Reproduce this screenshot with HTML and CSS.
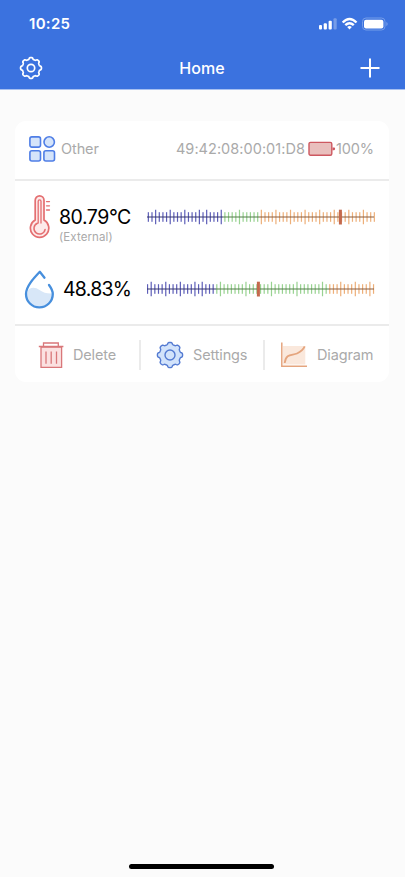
FILE: index.html
```
<!DOCTYPE html>
<html lang="en">
<head>
<meta charset="utf-8">
<title>Home</title>
<link rel="stylesheet" href="styles.css">
</head>
<body>
<header class="top">
  <div class="status">
    <span class="time">10:25</span>
    <svg class="indicators" width="70" height="16" viewBox="0 0 70 16">
      <g fill="#fff"><rect x="1" y="9" width="3" height="4.5" rx="1"/><rect x="5.7" y="7.2" width="3.2" height="6.3" rx="1"/><rect x="10.6" y="4.7" width="3.2" height="8.8" rx="1"/><rect x="15.5" y="2.2" width="3.2" height="11.3" rx="1" opacity=".3"/></g>
      <g fill="none" stroke="#fff" stroke-width="2.4"><path d="M24.7 6.5Q31.5-.3 38.5 6.5M27.3 9.2Q31.5 5.2 35.8 9.2"/></g>
      <path d="M29.2 11Q31.5 9 33.8 11L31.5 13.5Z" fill="#fff"/>
      <rect x="44.5" y="2" width="22.5" height="12" rx="3.5" fill="none" stroke="#759de9"/>
      <rect x="46" y="3.7" width="19.4" height="8.8" rx="2" fill="#fff"/>
      <path d="M68.3 6v4q1.4-.5 1.4-2t-1.4-2z" fill="#759de9"/>
    </svg>
  </div>
  <nav class="nav">
    <svg class="gear" width="24" height="24" viewBox="-12 -12 24 24" fill="none" stroke="#fff" stroke-width="1.7"><path data-gear="10.2"/><circle r="3.7"/></svg>
    <h1>Home</h1>
    <svg width="20" height="20" viewBox="0 0 20 20" stroke="#fff" stroke-width="2"><path d="M10 .5v19M.5 10h19"/></svg>
  </nav>
</header>
<main class="card">
  <section class="device">
    <svg width="28" height="28" viewBox="0 0 28 28" fill="#d5e4fa" stroke="#4f7ee6" stroke-width="1.6"><rect x="1.9" y="1.9" width="10.6" height="10.2" rx="2"/><circle cx="21.2" cy="7" r="5.2"/><rect x="1.9" y="15.8" width="10.6" height="10.2" rx="2"/><rect x="15.9" y="15.8" width="10.6" height="10.2" rx="2"/></svg>
    <span class="kind">Other</span>
    <span class="mac">49:42:08:00:01:D8</span>
    <svg class="cell" width="28" height="16" viewBox="0 0 28 16"><rect x="1" y="1.4" width="22.8" height="12.8" rx="1.5" fill="#e9bfbd" stroke="#cd5860" stroke-width="1.4"/><path d="M24.5 6.4h1.6q1 0 1 1.4t-1 1.4h-1.6z" fill="#cd5860"/></svg>
    <span class="level">100%</span>
  </section>
  <section class="readings">
    <div class="reading temp">
      <svg width="24" height="46" viewBox="0 0 24 46" fill="none" stroke="#e46f71" stroke-width="1.7" stroke-linecap="round"><path d="M6.2 26V6.2a4.4 4.4 0 0 1 8.8 0V26a9.2 9.2 0 1 1-8.8 0Z" fill="#fdeaea"/><path d="M9.2 29V7.2a1.4 1.4 0 0 1 2.8 0V29" stroke-width="1.3"/><path d="M8.4 29.3a5.6 5.6 0 1 0 7.7 6.1" stroke-width="1.5"/><path d="M17.5 7.6h3M17.5 11.8h3M17.5 16h3" stroke-width="1.3"/></svg>
      <div class="figure"><span class="value">80.79°C</span><small>(External)</small></div>
      <svg class="scale" data-start="1.3" data-majors="2,6,10,14,16,20,25,31,35,39,43,47,51,55,59" data-green="76" data-orange="112" data-mark="193.4" width="228" height="18" viewBox="0 0 228 18"></svg>
    </div>
    <div class="reading humid">
      <svg width="32" height="40" viewBox="0 0 32 40"><path d="M5.2 20Q10 17 15.5 21T28.2 24.5Q28 37.5 16 37.5 3.5 36.5 3 25 3 22 5.2 20Z" fill="#d8e7f8"/><path d="M20.5 8.7L15.8 2.8C9 10 2 17.5 2 25a13.3 13.3 0 0 0 26.8 0C28.8 21.5 27 18.7 25 16" fill="none" stroke="#478fdd" stroke-width="2.3" stroke-linecap="round" stroke-linejoin="round"/></svg>
      <div class="figure"><span class="value">48.83%</span></div>
      <svg class="scale" data-start=".5" data-majors="1,5,9,13,15,20,27,34,41,48,53,57,61" data-green="69" data-orange="182" data-mark="111.4" width="228" height="18" viewBox="0 0 228 18"></svg>
    </div>
  </section>
  <footer class="actions">
    <div class="action delete"><svg width="26" height="28" viewBox="0 0 26 28" fill="none" stroke="#d9777a" stroke-width="1.3"><path d="M3 6h20.6v20.3H3z" fill="#fbe1e1"/><path d="M.8 5.5h24.6M5.5 5V2h14.8v3M8 10.5v12.3M13.2 10.5v12.3M18.5 10.5v12.3"/></svg><span>Delete</span></div>
    <div class="action settings"><svg width="28" height="28" viewBox="-14 -14 28 28" fill="#d2e3fb" stroke="#547bd2" stroke-width="1.4"><path data-gear="12.3"/><circle r="5"/></svg><span>Settings</span></div>
    <div class="action diagram"><svg width="28" height="28" viewBox="0 0 28 28" fill="none" stroke="#e5a57e" stroke-width="1.5"><path d="M3 5h22.3v18.5H3z" fill="#fae8dc" stroke="none"/><path d="M1.8 1.5V25.3H27"/><path d="M4.7 22C6 12 12 14.7 17 12.5S23.3 8.5 24.7 5.4" stroke-width="1.8"/></svg><span>Diagram</span></div>
  </footer>
</main>
<div class="home-bar"></div>
<script src="ui.js"></script>
</body>
</html>
```
FILE: styles.css
```
* { box-sizing: border-box; }
body {
  margin: 0;
  height: 877px;
  display: flex;
  flex-direction: column;
  background: #fbfbfb;
  color: #000;
  font-family: Inter, "Liberation Sans", sans-serif;
}
svg { display: block; flex: none; }
.top { height: 90px; background: #3b72df; color: #fff; border-bottom: 1px solid #a7c0f1; }
.status { height: 47px; display: flex; justify-content: space-between; align-items: center; padding: 0 17px 0 29px; }
.time { font-size: 15px; font-weight: 600; letter-spacing: .3px; }
.nav { height: 42px; display: flex; justify-content: space-between; align-items: center; padding: 0 25px 0 19px; }
.nav h1 { margin: 0 0 0 1px; font-size: 16px; font-weight: 500; letter-spacing: .1px; }
.card { width: 374px; height: 261px; margin: 31px 0 0 15px; border-radius: 11px; background: #fff; }
.device { height: 60px; padding: 0 15px 3px 13px; display: flex; align-items: center; border-bottom: 2px solid #ebebeb; color: #aaa; font-size: 14.5px; white-space: nowrap; }
.kind { margin-left: 5px; letter-spacing: -.1px; }
.mac { margin-left: auto; letter-spacing: .04px; }
.cell { margin-left: 3px; }
.level { margin-left: 0; letter-spacing: -.1px; }
.readings { height: 145px; border-bottom: 2px solid #ebebeb; padding-top: 13px; }
.reading { display: flex; }
.temp { height: 72px; padding-left: 14px; }
.humid { padding-left: 9px; padding-top: 3px; }
.figure { display: flex; flex-direction: column; align-items: flex-start; white-space: nowrap; }
.temp .figure { width: 72px; margin: 11px 16px 0 6px; }
.humid .figure { width: 68px; margin: 8px 16px 0 7px; }
.value { font-size: 19.5px; line-height: 24px; letter-spacing: -.45px; }
.humid .value { letter-spacing: -.75px; }
.figure small { font-size: 11.5px; line-height: 16px; color: #aaa; letter-spacing: .1px; }
.scale { margin-top: 14px; }
.humid .scale { margin-top: 10.5px; }
.actions { height: 56px; display: grid; grid-template-columns: 126px 124px 124px; align-items: center; color: #aaa; font-size: 14.5px; padding-top: 1px; }
.action { height: 30px; display: flex; align-items: center; border-right: 2px solid #ebebeb; letter-spacing: -.15px; }
.action:last-child { border: 0; }
.delete { padding-left: 23px; gap: 9px; }
.settings { padding-left: 15px; gap: 9px; }
.diagram { padding-left: 15px; gap: 9px; }
.home-bar { width: 145px; height: 5px; margin: auto 0 8px 129px; border-radius: 3px; background: #000; }
```
FILE: ui.js
```
// Eight-lobed gear outline, radius taken from data-gear.
document.querySelectorAll('[data-gear]').forEach(p => {
  const r = +p.dataset.gear, pts = [];
  for (let i = 0; i < 160; i++) {
    const a = i * Math.PI / 80;
    const k = r * (0.94 + 0.085 * Math.tanh(2.2 * Math.cos(8 * a)));
    pts.push((k * Math.cos(a)).toFixed(2) + ' ' + (k * Math.sin(a)).toFixed(2));
  }
  p.setAttribute('d', 'M' + pts.join('L') + 'Z');
});

// Range scales: ticks, centre line and current-value mark.
document.querySelectorAll('.scale').forEach(s => {
  const d = s.dataset, majors = d.majors.split(',').map(Number);
  const green = +d.green, orange = +d.orange, mark = +d.mark;
  let out = '';
  for (let i = 0; i < 63; i++) {
    const x = +d.start + i * 3.645;
    if (x > 227.5) break;
    const major = majors.includes(i);
    const c = x < green ? '#5e5fb8' : x < orange ? '#98d291' : '#edaf79';
    const h = major ? 14.5 : 9.6;
    out += `<rect x="${x - .55}" y="${9 - h / 2}" width="1.2" height="${h}" fill="${c}"/>`;
  }
  [[0, green, '#35356f'], [green, orange, '#527c49'], [orange, 227, '#8a5c3c']].forEach(([a, b, c]) => {
    out += `<rect x="${a}" y="8.5" width="${b - a}" height="1" fill="${c}"/>`;
  });
  out += `<rect x="${mark - 1.5}" y="1.7" width="3" height="14.8" fill="#c4694d"/>`;
  s.innerHTML = out;
});
```
